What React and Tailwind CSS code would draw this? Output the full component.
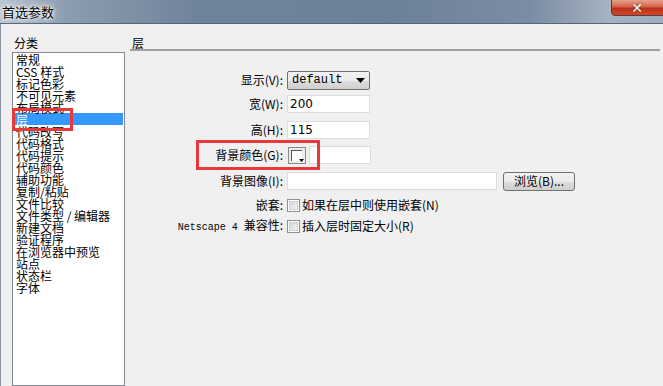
import React from "react";

const items = [
  "常规",
  "CSS 样式",
  "标记色彩",
  "不可见元素",
  "布局模式",
  "层",
  "代码改写",
  "代码格式",
  "代码提示",
  "代码颜色",
  "辅助功能",
  "复制/粘贴",
  "文件比较",
  "文件类型 / 编辑器",
  "新建文档",
  "验证程序",
  "在浏览器中预览",
  "站点",
  "状态栏",
  "字体",
];

function Checkbox() {
  return (
    <div className="w-[13px] h-[13px] border border-[#8f8f8f] bg-white p-[1px]">
      <div className="w-full h-full bg-gradient-to-br from-[#d6d6d6] to-[#f4f4f4] border border-[#cfcfcf]" />
    </div>
  );
}

function Input({ w, children }) {
  return (
    <div
      className={`h-[18px] ${w} border border-[#dcdcdc] bg-white flex items-center pl-[2px] text-[12px] leading-none text-black`}
      style={{ fontFamily: "Tahoma, 'DejaVu Sans', sans-serif" }}
    >
      {children}
    </div>
  );
}

export default function App() {
  const cjk = { fontFamily: "'Noto Sans CJK SC', 'Noto Sans', sans-serif" };
  return (
    <div
      className="w-[663px] h-[386px] overflow-hidden flex flex-col bg-[#f0f0f0] relative text-[12px] text-black"
      style={cjk}
    >
      {/* Title bar */}
      <div className="h-[24px] shrink-0 relative bg-[linear-gradient(to_right,#bac6d2_0%,#8c9db0_10%,#6f8399_30%,#6d8199_60%,#7a8da3_80%,#a6b3c1_92%,#9eacbb_100%)] border-b border-[#56667a]">
        <div
          className="absolute left-[2px] top-[3px] text-[13px] leading-[17px] text-black"
          style={{ textShadow: "0 0 6px #fff, 0 0 4px #fff, 0 0 2px #fff" }}
        >
          首选参数
        </div>
        <div className="absolute right-[-4px] top-[-1px] w-[56px] h-[17px] rounded-b-[4px] border border-[#5a3a34] bg-[linear-gradient(to_bottom,#e9a08f_0%,#d3634a_45%,#b8301a_55%,#d24a2c_100%)] flex items-center justify-center">
          <span className="text-white font-bold text-[14px] leading-none mr-[4px]" style={{ fontFamily: "'DejaVu Sans', sans-serif", textShadow: "0 0 2px #333" }}>
            ✕
          </span>
        </div>
      </div>

      {/* Body */}
      <div className="flex-1 flex border-l border-[#8a95a3] min-h-0">
        {/* Left column */}
        <div className="w-[124px] shrink-0 pl-[11px] flex flex-col">
          <div className="h-[28px] pt-[13px] pl-[2px] leading-[12px]">分类</div>
          <div className="flex-1 w-[113px] border border-[#828790] bg-white relative">
            {items.map((t) => (
              <div
                key={t}
                className={`h-[12px] leading-[12px] pl-[2px] mx-[1px] whitespace-nowrap ${
                  t === "层" ? "bg-[#3399ff] text-white" : ""
                }`}
              >
                <span className="relative top-[1px]">{t}</span>
              </div>
            ))}
            <div className="absolute left-[-1px] top-[55px] w-[61px] h-[23px] border-[3px] border-[#e8393a]" />
          </div>
        </div>

        {/* Right panel */}
        <div className="flex-1 flex flex-col pl-[5px] pr-[3px]">
          <div className="h-[27px] pt-[13px] pl-[2px] leading-[12px] border-b-2 border-[#a0a0a0]">层</div>
          <div className="flex flex-col pt-[17px] relative">
            {/* Row 1 */}
            <div className="h-[24px] flex items-center">
              <div className="w-[157px] text-right pr-[4px] leading-none">显示(V):</div>
              <div className="w-[83px] h-[19px] border border-[#707070] rounded-[2px] bg-[linear-gradient(to_bottom,#f2f2f2_0%,#ebebeb_50%,#dddddd_51%,#cfcfcf_100%)] flex items-center justify-between px-[4px]">
                <span className="text-[12px] leading-none" style={{ fontFamily: "'Liberation Mono', monospace" }}>default</span>
                <svg width="9" height="5" viewBox="0 0 9 5"><path d="M0 0H9L4.5 5Z" fill="#000" /></svg>
              </div>
            </div>
            {/* Row 2 */}
            <div className="h-[23px] flex items-center">
              <div className="w-[157px] text-right pr-[4px] leading-none">宽(W):</div>
              <Input w="w-[83px]">200</Input>
            </div>
            {/* Row 3 */}
            <div className="h-[29px] flex items-center">
              <div className="w-[157px] text-right pr-[4px] leading-none">高(H):</div>
              <Input w="w-[83px]">115</Input>
            </div>
            {/* Row 4 */}
            <div className="h-[22px] flex items-center relative">
              <div className="w-[157px] text-right pr-[4px] leading-none">背景颜色(G):</div>
              <div className="w-[18px] h-[17px] border border-[#8a8a8a] bg-[#ececec] relative ml-[1px]">
                <div className="absolute left-[2px] top-[2px] w-[11px] h-[11px] border-t border-l border-[#555] bg-white" />
                <svg className="absolute right-[1px] bottom-[1px]" width="5" height="3" viewBox="0 0 5 3"><path d="M0 0H5L2.5 3Z" fill="#000" /></svg>
              </div>
              <div className="ml-[3px]"><Input w="w-[62px]"></Input></div>
              <div className="absolute left-[66px] top-[-4px] w-[124px] h-[30px] border-[3px] border-[#e8393a]" />
            </div>
            {/* Row 5 */}
            <div className="h-[30px] flex items-center">
              <div className="w-[157px] text-right pr-[4px] leading-none">背景图像(I):</div>
              <Input w="w-[210px]"></Input>
              <div className="ml-[6px] w-[72px] h-[19px] border border-[#707070] rounded-[3px] bg-[linear-gradient(to_bottom,#f2f2f2_0%,#ebebeb_50%,#dddddd_51%,#cfcfcf_100%)] flex items-center justify-center leading-none">
                浏览(B)...
              </div>
            </div>
            {/* Row 6 */}
            <div className="h-[18px] flex items-center">
              <div className="w-[157px] text-right pr-[4px] leading-none">嵌套:</div>
              <Checkbox />
              <span className="ml-[2px] leading-none">如果在层中则使用嵌套(N)</span>
            </div>
            {/* Row 7 */}
            <div className="h-[24px] flex items-center">
              <div className="w-[157px] text-right pr-[4px] leading-none whitespace-nowrap">
                <span style={{ fontFamily: "'Liberation Mono', monospace" }} className="text-[10px]">Netscape 4 </span>兼容性:
              </div>
              <Checkbox />
              <span className="ml-[2px] leading-none">插入层时固定大小(R)</span>
            </div>
          </div>
        </div>
      </div>
    </div>
  );
}
